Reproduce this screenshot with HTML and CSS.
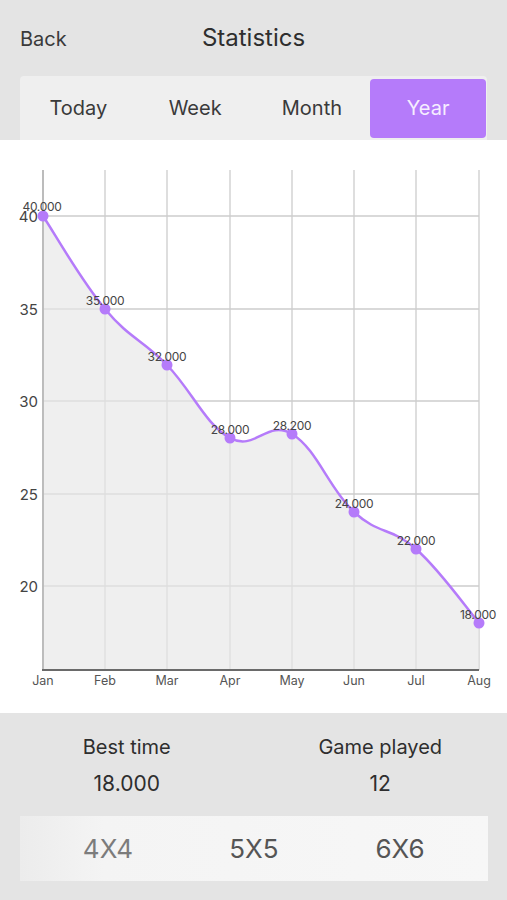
FILE: index.html
```html
<!DOCTYPE html>
<html lang="en">
<head>
  <meta charset="UTF-8">
  <meta name="viewport" content="width=device-width, initial-scale=1.0">
  <title>Statistics</title>
  <link rel="stylesheet" href="styles.css">
</head>
<body>
  <div id="header">
    <div class="nav">
      <span class="back">Back</span>
      <span class="title">Statistics</span>
      <span></span>
    </div>
    <div class="periods">
      <div class="period">Today</div>
      <div class="period">Week</div>
      <div class="period">Month</div>
      <div class="period active">Year</div>
    </div>
  </div>

  <div id="chart">
    <svg width="507" height="573" viewBox="0 140 507 573">
      <g class="grid">
        <line x1="43" y1="170" x2="43" y2="670"/>
        <line x1="105" y1="170" x2="105" y2="670"/>
        <line x1="167" y1="170" x2="167" y2="670"/>
        <line x1="230" y1="170" x2="230" y2="670"/>
        <line x1="292" y1="170" x2="292" y2="670"/>
        <line x1="354" y1="170" x2="354" y2="670"/>
        <line x1="416" y1="170" x2="416" y2="670"/>
        <line x1="479" y1="170" x2="479" y2="670"/>
        <line x1="43" y1="216" x2="479" y2="216"/>
        <line x1="43" y1="309" x2="479" y2="309"/>
        <line x1="43" y1="401" x2="479" y2="401"/>
        <line x1="43" y1="494" x2="479" y2="494"/>
        <line x1="43" y1="586" x2="479" y2="586"/>
      </g>
      <path class="area" d="M43,216 C55.4,234.6 80.2,279.2 105,309 C129.8,338.8 142,339.2 167,365 C192,390.8 205,424.2 230,438 C255,451.8 267.2,419.2 292,434 C316.8,448.8 329.2,489 354,512 C378.8,535 391,526.8 416,549 C441,571.2 466.4,608.2 479,623 L479,670 L43,670 Z"/>
      <line class="y-axis" x1="43" y1="170" x2="43" y2="670"/>
      <line class="x-axis" x1="42" y1="670" x2="479" y2="670"/>
      <path class="curve" d="M43,216 C55.4,234.6 80.2,279.2 105,309 C129.8,338.8 142,339.2 167,365 C192,390.8 205,424.2 230,438 C255,451.8 267.2,419.2 292,434 C316.8,448.8 329.2,489 354,512 C378.8,535 391,526.8 416,549 C441,571.2 466.4,608.2 479,623"/>

      <g class="ylab">
        <text x="38" y="222">40</text>
        <text x="38" y="315">35</text>
        <text x="38" y="407">30</text>
        <text x="38" y="500">25</text>
        <text x="38" y="592">20</text>
      </g>
      <g class="xlab">
        <text x="43" y="685">Jan</text>
        <text x="105" y="685">Feb</text>
        <text x="167" y="685">Mar</text>
        <text x="230" y="685">Apr</text>
        <text x="292" y="685">May</text>
        <text x="354" y="685">Jun</text>
        <text x="416" y="685">Jul</text>
        <text x="479" y="685">Aug</text>
      </g>

      <g class="dot">
        <circle cx="43" cy="216" r="5.5"/>
        <circle cx="105" cy="309" r="5.5"/>
        <circle cx="167" cy="365" r="5.5"/>
        <circle cx="230" cy="438" r="5.5"/>
        <circle cx="292" cy="434" r="5.5"/>
        <circle cx="354" cy="512" r="5.5"/>
        <circle cx="416" cy="549" r="5.5"/>
        <circle cx="479" cy="623" r="5.5"/>
      </g>
      <g class="val">
        <text x="42" y="211">40.000</text>
        <text x="105" y="305">35.000</text>
        <text x="167" y="361">32.000</text>
        <text x="230" y="434">28.000</text>
        <text x="292" y="430">28.200</text>
        <text x="354" y="508">24.000</text>
        <text x="416" y="545">22.000</text>
        <text x="478" y="619">18.000</text>
      </g>
    </svg>
  </div>

  <div id="summary">
    <div class="stats">
      <div class="stat">
        <div class="stat-label">Best time</div>
        <div class="stat-value">18.000</div>
      </div>
      <div class="stat">
        <div class="stat-label">Game played</div>
        <div class="stat-value">12</div>
      </div>
    </div>
    <div class="sizes">
      <div class="size faded">4X4</div>
      <div class="size">5X5</div>
      <div class="size">6X6</div>
    </div>
  </div>
</body>
</html>
```

FILE: styles.css
```css
body {
  margin: 0;
  font-family: 'Inter', 'Noto Sans', sans-serif;
  color: #333;
  background-color: #fff;
}

#header {
  background-color: #e4e4e4;
  height: 140px;
}

.nav {
  display: grid;
  grid-template-columns: 1fr auto 1fr;
  align-items: baseline;
  padding-top: 24px;
  height: 76px;
  box-sizing: border-box;
}

.back {
  font-size: 20px;
  line-height: 28px;
  padding-left: 20px;
  color: #3a3a3a;
}

.title {
  font-size: 24px;
  line-height: 28px;
  color: #2e2e2e;
}

.periods {
  display: grid;
  grid-template-columns: repeat(4, 1fr);
  margin: 0 20px;
  height: 64px;
  background-color: #efefef;
  border-radius: 4px 4px 0 0;
}

.period {
  display: flex;
  align-items: center;
  justify-content: center;
  font-size: 20px;
  color: #3a3a3a;
  padding-bottom: 1px;
}

.period.active {
  background-color: #b57bfa;
  color: #f6eeff;
  border-radius: 4px;
  margin: 3px 1px 2px 0;
}

#chart {
  height: 573px;
}

#chart svg {
  display: block;
}

.grid line {
  stroke: #cdcdcd;
  stroke-width: 1.3;
}

.area {
  fill: #e6e6e6;
  fill-opacity: 0.65;
}

.y-axis {
  stroke: #b0b0b0;
  stroke-width: 1.5;
}

.x-axis {
  stroke: #6a6a6a;
  stroke-width: 2;
}

.curve {
  fill: none;
  stroke: #b57bfa;
  stroke-width: 2.5;
}

.dot circle {
  fill: #b57bfa;
}

.ylab text {
  font-size: 15px;
  fill: #444;
  text-anchor: end;
}

.xlab text {
  font-size: 12.5px;
  fill: #555;
  text-anchor: middle;
}

.val text {
  font-size: 12px;
  fill: #454545;
  text-anchor: middle;
  letter-spacing: -0.3px;
}

#summary {
  background-color: #e4e4e4;
  height: 187px;
  padding-top: 22px;
  box-sizing: border-box;
}

.stats {
  display: grid;
  grid-template-columns: 1fr 1fr;
  text-align: center;
}

.stat-label {
  font-size: 20px;
  line-height: 24px;
  color: #2e2e2e;
}

.stat-value {
  font-size: 21px;
  line-height: 26px;
  margin-top: 12px;
  color: #2e2e2e;
}

.sizes {
  display: grid;
  grid-template-columns: repeat(3, 1fr);
  margin: 19px 19px 0 20px;
  padding: 0 15px;
  height: 65px;
  background: linear-gradient(to right, #ececec, #f4f4f4 18%, #f7f7f7);
}

.size {
  display: flex;
  align-items: center;
  justify-content: center;
  font-size: 26px;
  color: #555;
}

.size.faded {
  color: #7c7c7c;
}
```
